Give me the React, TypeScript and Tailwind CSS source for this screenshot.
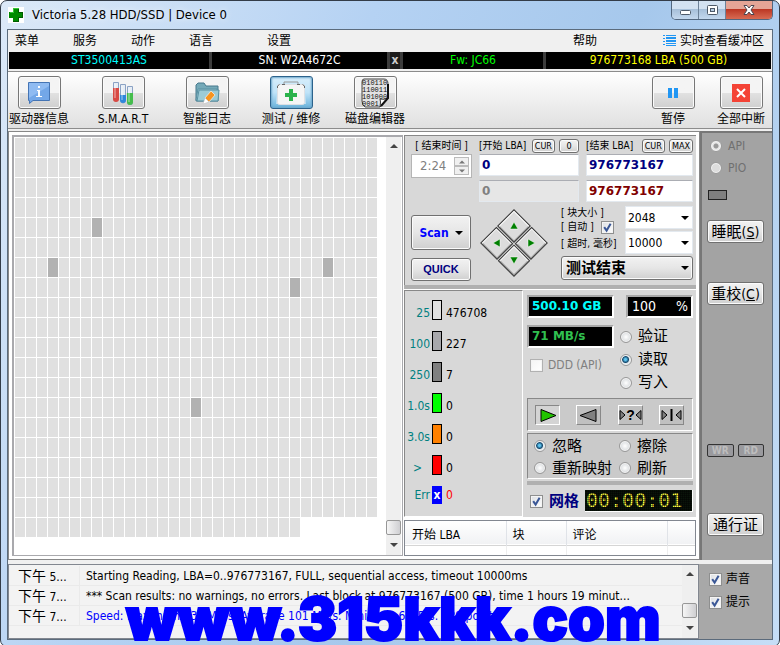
import { ReactNode } from "react";
import clsx from "clsx";

const COLUMNS = 33;
const TOTAL_CELLS = 19 * COLUMNS + 26;
const SLOW_CELLS = [
  4 * COLUMNS + 7,
  6 * COLUMNS + 3,
  6 * COLUMNS + 28,
  7 * COLUMNS + 25,
  13 * COLUMNS + 16,
];

const TIMINGS = [
  { label: "25", value: "476708", color: "bg-[#e0e0e0]" },
  { label: "100", value: "227", color: "bg-[#a8a8ac]" },
  { label: "250", value: "7", color: "bg-[#808080]" },
  { label: "1.0s", value: "0", color: "bg-[#00ff00]" },
  { label: "3.0s", value: "0", color: "bg-[#ff8000]" },
  { label: ">", value: "0", color: "bg-[#ff0000]" },
];

const LOG = [
  {
    time: "下午 5...",
    text: "Starting Reading, LBA=0..976773167, FULL, sequential access, timeout 10000ms",
    blue: false,
  },
  {
    time: "下午 7...",
    text: "*** Scan results: no warnings, no errors. Last block at 976773167 (500 GB), time 1 hours 19 minut...",
    blue: false,
  },
  {
    time: "下午 7...",
    text: "Speed: Maximum 130 MB/s. Average 101 MB/s. Minimum 6 MB/s. 389 points.",
    blue: true,
  },
];

const buttonFace =
  "rounded-[3px] border border-[#707070] bg-linear-to-b from-[#f2f2f2] via-[#e6e6e6] to-[#cfcfcf] shadow-[inset_0_0_0_1px_#fbfbfb]";
const sunken =
  "border border-t-[#888] border-l-[#888] border-r-white border-b-white";

function Check({
  label,
  checked,
  disabled,
  children,
  className,
}: {
  label?: string;
  checked?: boolean;
  disabled?: boolean;
  children?: ReactNode;
  className?: string;
}) {
  return (
    <label className={clsx("flex items-center whitespace-nowrap", className)}>
      <span className="relative size-[13px] shrink-0">
        <input
          type="checkbox"
          defaultChecked={checked}
          disabled={disabled}
          aria-label={label}
          className="peer block size-[13px] appearance-none border border-[#8e8f8f] bg-linear-to-br from-[#dcdfe3] to-white shadow-[inset_0_0_0_1px_#f4f4f4] disabled:border-[#b1b1b1] disabled:from-[#f4f4f4]"
        />
        <svg
          viewBox="0 0 13 13"
          className="pointer-events-none absolute inset-0 hidden peer-checked:block"
        >
          <path
            d="M3.2 6.2 L5.6 9.6 L9.6 2.8"
            fill="none"
            stroke="#3a5796"
            strokeWidth="2"
          />
        </svg>
      </span>
      {children}
    </label>
  );
}

function Radio({
  name,
  checked,
  disabled,
  children,
}: {
  name: string;
  checked?: boolean;
  disabled?: boolean;
  children: ReactNode;
}) {
  return (
    <label className="flex items-center gap-[6px] whitespace-nowrap">
      <input
        type="radio"
        name={name}
        defaultChecked={checked}
        disabled={disabled}
        className={clsx(
          "size-3 shrink-0 appearance-none rounded-full border border-[#999] shadow-[inset_0_0_0_1px_#f4f4f4]",
          disabled
            ? "bg-[#ddd] checked:bg-[radial-gradient(circle,#999_0_2px,#e8e8e8_3px)]"
            : "bg-radial from-white to-[#c8ccd0] checked:bg-[radial-gradient(circle_at_45%_45%,#5fc4ee_0_1px,#14496e_3px,#dfe6ea_4px)]"
        )}
      />
      {children}
    </label>
  );
}

function ToolButton({
  label,
  active,
  children,
}: {
  label: string;
  active?: boolean;
  children: ReactNode;
}) {
  return (
    <button className="flex w-[60px] shrink-0 flex-col items-center gap-px">
      <span
        className={clsx(
          "flex h-[33px] w-[43px] items-center justify-center rounded-[3px] border",
          active
            ? "border-[#2c628b] bg-linear-to-b from-[#d8eefb] via-[#bfe3f8] to-[#68b3db] shadow-[inset_0_0_2px_1px_#6fa8cc]"
            : "border-[#777] bg-linear-to-b from-[#f4f4f4] from-50% via-[#e2e2e2] via-50% to-[#cfcfcf] shadow-[inset_0_0_0_1px_#fbfbfb]"
        )}
      >
        {children}
      </span>
      <span className="text-xs leading-[18px] whitespace-nowrap">{label}</span>
    </button>
  );
}

function ScrollBar({ className }: { className?: string }) {
  return (
    <div
      className={clsx(
        "flex w-[15px] shrink-0 flex-col items-center bg-[#efefef]",
        className
      )}
    >
      <svg viewBox="0 0 8 16" className="h-4 w-2 shrink-0">
        <path d="M0 11 L4 7 L8 11Z" fill="#444" />
      </svg>
      <div className="flex-1" />
      <div className="h-[15px] w-[15px] shrink-0 rounded-[2px] border border-[#979797] bg-linear-to-r from-[#f6f6f6] to-[#cfcfd2]" />
      <svg viewBox="0 0 8 20" className="h-5 w-2 shrink-0">
        <path d="M0 8 L8 8 L4 12Z" fill="#444" />
      </svg>
    </div>
  );
}

function Arrow({ className }: { className?: string }) {
  return (
    <svg viewBox="0 0 8 4" className={clsx("h-1 w-2", className)}>
      <path d="M0 0 L8 0 L4 4Z" fill="#000" />
    </svg>
  );
}

function Dropdown({
  label,
  value,
  className,
}: {
  label: string;
  value: string;
  className: string;
}) {
  return (
    <div className="relative">
      <select
        aria-label={label}
        defaultValue={value}
        className={clsx("block w-full appearance-none", className)}
      >
        <option>{value}</option>
      </select>
      <Arrow className="pointer-events-none absolute top-1/2 right-1 -translate-y-1/2" />
    </div>
  );
}

function TitleBar() {
  return (
    <header className="flex h-[28px] items-start pl-px">
      <svg viewBox="0 0 16 16" className="mt-[6px] size-4 bg-white">
        <path d="M5 1h6v4h4v6h-4v4H5v-4H1V5h4z" fill="#008a00" />
        <path d="M5 1h6v1H6v4H2V5h3z" fill="#35c435" />
        <path d="M11 2v3h4v6h-4v4H5v-1h5v-4h4V6h-4V2z" fill="#005c00" />
      </svg>
      <h1 className="ml-2 flex-1 pt-1 text-[13px] leading-5 [text-shadow:0_0_6px_white]">
        Victoria 5.28 HDD/SSD | Device 0
      </h1>
      <div className="flex h-[19px] overflow-hidden rounded-b-[5px] border border-t-0 border-[#52677f]">
        <button
          aria-label="Minimize"
          className="flex w-[27px] items-center justify-center border-r border-[#6d8299] bg-linear-to-b from-[#d3e2f2] from-45% via-[#a6bfd9] via-45% to-[#c3d8ee]"
        >
          <svg viewBox="0 0 13 12" className="h-3 w-[13px]">
            <rect x="1.5" y="6.5" width="10" height="4" rx="1" fill="#fff" stroke="#4e5a69" />
          </svg>
        </button>
        <button
          aria-label="Maximize"
          className="flex w-[27px] items-center justify-center border-r border-[#6d8299] bg-linear-to-b from-[#d3e2f2] from-45% via-[#a6bfd9] via-45% to-[#c3d8ee]"
        >
          <svg viewBox="0 0 13 12" className="h-3 w-[13px]">
            <rect x="1.5" y="1.5" width="10" height="9" rx="1" fill="#fff" stroke="#4e5a69" />
            <rect x="4.5" y="4.5" width="4" height="3" fill="#b9cde2" stroke="#4e5a69" />
          </svg>
        </button>
        <button
          aria-label="Close"
          className="flex w-[46px] items-center justify-center bg-linear-to-b from-[#e5a596] from-45% via-[#bb3522] via-45% to-[#d86a52]"
        >
          <svg viewBox="0 0 12 12" className="size-3">
            <path d="M1 1.5h3l2 2.5 2-2.5h3L8 6l3 4.5H8L6 8l-2 2.5H1L4 6z" fill="#fff" stroke="#4c4650" />
          </svg>
        </button>
      </div>
    </header>
  );
}

function MenuBar() {
  return (
    <nav className="flex h-[21px] items-center bg-[#f0f0f0] pr-2 pl-[7px] text-xs leading-4">
      <button className="w-[58px] text-left">菜单</button>
      <button className="w-[58px] text-left">服务</button>
      <button className="w-[58px] text-left">动作</button>
      <button className="w-[78px] text-left">语言</button>
      <button className="text-left">设置</button>
      <div className="flex-1" />
      <button className="w-[90px] text-left">帮助</button>
      <button className="flex items-center gap-1 whitespace-nowrap">
        <svg viewBox="0 0 13 13" className="size-[13px]" fill="#2196f3">
          <path d="M0 1h2v1H0zM0 4h2v1H0zM0 7h2v1H0zM0 10h2v1H0zM3 1h10v1H3zM3 3h10v2H3zM3 6h10v2H3zM3 9h10v1H3zM3 11h10v1H3z" />
        </svg>
        实时查看缓冲区
      </button>
    </nav>
  );
}

function DriveBar() {
  return (
    <div className="mx-px mt-px flex h-[17px] bg-black text-center text-xs leading-[17px] text-white">
      <div className="w-[203px] border-r-[3px] border-[#3c3c3c] text-[#00ffff]">
        ST3500413AS
      </div>
      <div className="w-[178px] border-r-[3px] border-[#3c3c3c]">SN: W2A4672C</div>
      <button aria-label="Clear" className="w-[13px] border-r-[3px] border-[#3c3c3c] bg-[#1c1c1c] font-bold leading-[15px] text-[#ccc]">
        x
      </button>
      <div className="w-[143px] border-r-[3px] border-[#3c3c3c] text-[#00ff00]">
        Fw: JC66
      </div>
      <div className="flex-1 text-[#ffff00]">976773168 LBA (500 GB)</div>
    </div>
  );
}

function Toolbar() {
  return (
    <div className="mt-[2px] flex h-[58px] border-y border-[#8c8c8c] bg-linear-to-b from-white to-[#e0e0e0] px-px pt-1">
      <div className="flex gap-6">
        <ToolButton label="驱动器信息">
          <svg viewBox="0 0 22 24" className="h-6 w-[22px]">
            <path d="M0.500 1.500h21v18H5l-3.500 3v-3h-1z" fill="#73a7e8" stroke="#4474b4" />
            <path d="M1 2h20v3L1 17z" fill="#8fbbf2" />
            <path d="M10 5h2v2h-2zM9 9h3v6h2v1H8v-1h2v-5H9z" fill="#fff" />
          </svg>
        </ToolButton>
        <ToolButton label="S.M.A.R.T">
          <svg viewBox="0 0 22 24" className="h-6 w-[22px]">
            <g fill="#e6edf5" stroke="#8ba2c4">
              <path d="M1.500 1.500h5v16a2.500 2.500 0 0 1-5 0z" />
              <path d="M8.500 3.500h5v16a2.500 2.500 0 0 1-5 0z" />
              <path d="M15.500 5.500h5v16a2.500 2.500 0 0 1-5 0z" />
            </g>
            <path d="M1 7h6v11a3 3 0 0 1-6 0z" fill="#d84a44" />
            <path d="M8 14h6v5a3 3 0 0 1-6 0z" fill="#2f87dc" />
            <path d="M15 12h6v9a3 3 0 0 1-6 0z" fill="#45bd4c" />
            <path d="M3 3v14M10 5v14M17 7v14" stroke="#fff" strokeOpacity=".6" />
          </svg>
        </ToolButton>
        <ToolButton label="智能日志">
          <svg viewBox="0 0 26 24" className="h-6 w-[26px]">
            <path d="M2 4l2-2h6l2 3h12v15H2z" fill="#74a9b8" stroke="#47798c" />
            <path d="M4 8h19v11H2z" fill="#b9dbe3" stroke="#5890a2" />
            <path d="M3 20l2-11h20l-1 11z" fill="#9ccbd6" stroke="#5890a2" />
            <path d="M11 17l6-7 4 4-6 7z" fill="#f79420" stroke="#fff" strokeWidth=".6" />
            <path d="M11 17l4 4-6 2z" fill="#fff" stroke="#bbb" strokeWidth=".5" />
          </svg>
        </ToolButton>
        <ToolButton label="测试 / 维修" active>
          <svg viewBox="0 0 32 26" className="h-[26px] w-8">
            <path d="M3 4h26l2 20H1z" fill="#fff" fillOpacity=".5" />
            <path d="M9 4V2h14v2" fill="none" stroke="#999" />
            <rect x="2.500" y="4.500" width="27" height="20" rx="2" fill="#f5f5f5" stroke="#dde0e4" />
            <path d="M2.500 8V6l2-1.500M29.500 8V6l-2-1.500M7 4.500h3M22 4.500h3" fill="none" stroke="#666" />
            <path d="M14 9h4v4h4v4h-4v4h-4v-4h-4v-4h4z" fill="#2bb24c" />
          </svg>
        </ToolButton>
        <ToolButton label="磁盘编辑器">
          <svg viewBox="0 0 28 30" className="h-[30px] w-7">
            <path d="M3 1h20q4 0 4 5v14l-8 9H4q-3-2-3-6V4q0-3 2-3z" fill="#e2e2e2" stroke="#444" />
            <g fontFamily="Liberation Mono, monospace" fontSize="7" fill="#111">
              <text x="1" y="7">010110</text>
              <text x="1" y="14">110011</text>
              <text x="1" y="21">101000</text>
              <text x="1" y="28">0001</text>
            </g>
            <path d="M19 29q1-6 0-8 4 1 8-1z" fill="#fff" stroke="#333" />
            <path d="M27 6v14l-7 8" fill="none" stroke="#111" strokeWidth="2" />
          </svg>
        </ToolButton>
      </div>
      <div className="flex-1" />
      <div className="flex gap-2">
        <ToolButton label="暂停">
          <svg viewBox="0 0 10 10" className="size-[10px]">
            <path d="M0 0h4v10H0zM6 0h4v10H6z" fill="#2196f3" />
          </svg>
        </ToolButton>
        <ToolButton label="全部中断">
          <svg viewBox="0 0 18 18" className="size-[18px]">
            <path d="M0 0h18v18H0z" fill="#f44336" />
            <path d="M5 5l8 8M13 5l-8 8" stroke="#fff" strokeWidth="2" />
          </svg>
        </ToolButton>
      </div>
    </div>
  );
}

function BlockMap() {
  return (
    <div className="flex min-w-0 flex-1 border-t-2 border-r border-b border-l-2 border-[#a9a9ad] bg-white">
      <div className="grid flex-1 auto-rows-[19px] grid-cols-[repeat(33,10px)] content-start gap-px pt-px pl-px">
        {Array.from({ length: TOTAL_CELLS }, (_, i) => (
          <div
            key={i}
            className={SLOW_CELLS.includes(i) ? "bg-[#b2b2b2]" : "bg-[#e0e0e0]"}
          />
        ))}
      </div>
      <ScrollBar className="mr-px" />
    </div>
  );
}

function DirectionPad() {
  const dirs = [
    { name: "Up", d: "M2 9 L6 2 L10 9Z" },
    { name: "Right", d: "M3 2 L10 6 L3 10Z" },
    { name: "Left", d: "M9 2 L2 6 L9 10Z" },
    { name: "Down", d: "M2 3 L6 10 L10 3Z" },
  ];
  return (
    <div className="m-[9px] grid size-12 rotate-45 grid-cols-2 gap-px">
      {dirs.map((dir) => (
        <button
          key={dir.name}
          aria-label={dir.name}
          className="flex items-center justify-center border border-[#333] bg-[#dcdcdc] shadow-[inset_1px_1px_0_white,inset_-1px_-1px_0_#999]"
        >
          <svg viewBox="0 0 12 12" className="size-3 -rotate-45">
            <path d={dir.d} fill="#008000" stroke="#fff" strokeWidth=".5" />
          </svg>
        </button>
      ))}
    </div>
  );
}

function SmallButton({ children }: { children: ReactNode }) {
  return (
    <button className={clsx("h-[14px] min-w-5 px-[2px] text-[9px] leading-3", buttonFace)}>
      {children}
    </button>
  );
}

function LbaInput({
  label,
  value,
  className,
  disabled,
}: {
  label: string;
  value: string;
  className: string;
  disabled?: boolean;
}) {
  return (
    <input
      type="text"
      aria-label={label}
      defaultValue={value}
      disabled={disabled}
      className={clsx(
        "block h-[22px] w-full border border-[#e3e9ef] border-t-[#abadb3] px-[2px] font-['DejaVu_Sans'] text-xs font-bold",
        className
      )}
    />
  );
}

function ScanSettings() {
  return (
    <section className="h-[150px] border-t border-l border-[#888] bg-[#d8d8d8] pr-[3px] pl-[6px]">
      <div className="flex gap-[7px] pt-[2px] text-[10px] leading-4">
        <div className="w-[61px]">
          <div className="text-center whitespace-nowrap">[ 结束时间 ]</div>
          <div className="flex h-6 items-center border border-[#b5b5b5] bg-white pr-[2px]">
            <input
              type="text"
              aria-label="结束时间"
              defaultValue="2:24"
              disabled
              className="w-0 flex-1 pl-2 text-[13px] text-[#808080]"
            />
            <div className="flex w-[15px] flex-col">
              <button aria-label="Increase" disabled className="flex h-[9px] items-center justify-center border border-[#bbb] bg-[#f0f0f0]">
                <Arrow className="w-[6px] rotate-180 opacity-50" />
              </button>
              <button aria-label="Decrease" disabled className="flex h-[9px] items-center justify-center border border-[#bbb] bg-[#f0f0f0]">
                <Arrow className="w-[6px] opacity-50" />
              </button>
            </div>
          </div>
        </div>
        <div className="w-[100px]">
          <div className="flex items-center whitespace-nowrap">
            <span className="flex-1">[开始 LBA]</span>
            <span className="flex gap-1">
              <SmallButton>CUR</SmallButton>
              <SmallButton>0</SmallButton>
            </span>
          </div>
          <LbaInput label="开始 LBA" value="0" className="bg-white text-[#000080]" />
          <div className="h-1" />
          <LbaInput
            label="当前 LBA"
            value="0"
            disabled
            className="bg-[#e6e6e6] text-[#808080]"
          />
        </div>
        <div className="flex-1">
          <div className="flex items-center whitespace-nowrap">
            <span className="flex-1">[结束 LBA]</span>
            <span className="flex gap-1">
              <SmallButton>CUR</SmallButton>
              <SmallButton>MAX</SmallButton>
            </span>
          </div>
          <LbaInput label="结束 LBA" value="976773167" className="bg-white text-[#000080]" />
          <div className="h-1" />
          <LbaInput label="最后 LBA" value="976773167" className="bg-white text-[#800000]" />
        </div>
      </div>
      <div className="mt-1 flex">
        <div className="flex w-[60px] flex-col gap-2 pt-[9px]">
          <button
            className={clsx(
              "flex h-[35px] items-center justify-center gap-[6px] text-xs font-bold text-[#0000ff]",
              buttonFace
            )}
          >
            Scan
            <Arrow />
          </button>
          <button className={clsx("h-[23px] font-['Liberation_Sans'] text-[11px] font-bold text-[#000080]", buttonFace)}>
            QUICK
          </button>
        </div>
        <div className="ml-[10px] pt-1">
          <DirectionPad />
        </div>
        <div className="ml-[14px] flex-1">
          <div className="flex text-[10px]">
            <div className="w-16 leading-[14px] whitespace-nowrap">
              <div>[ 块大小 ]</div>
              <Check checked className="flex-row-reverse justify-end gap-[7px]">
                [ 自动 ]
              </Check>
              <div className="mt-[3px]">[ 超时, 毫秒]</div>
            </div>
            <div className="flex flex-1 flex-col gap-[2px]">
              <Dropdown label="块大小" value="2048" className="h-[23px] border border-[#e3e9ef] bg-white pl-[2px] text-xs" />
              <Dropdown label="超时" value="10000" className="h-[23px] border border-[#e3e9ef] bg-white pl-[2px] text-xs" />
            </div>
          </div>
          <div className="pt-[2px]">
            <Dropdown
              label="测试结束"
              value="测试结束"
              className={clsx("h-6 pl-1 text-[15px] leading-5 font-bold", buttonFace)}
            />
          </div>
        </div>
      </div>
    </section>
  );
}

function Timings() {
  return (
    <section className="w-[119px] border border-t-[#888] border-r-white border-b-white border-l-[#888] pt-[9px] text-xs leading-[14px]">
      {TIMINGS.map((t) => (
        <div key={t.label} className="mb-[11px] flex h-5 items-end gap-[2px]">
          <span className={clsx("w-[25px] text-right whitespace-nowrap text-[#008080]", t.label === ">" && "pr-2")}>
            {t.label}
          </span>
          <span className={clsx("h-5 w-[10px] border border-black", t.color)} />
          <span className="pl-[2px]">{t.value}</span>
        </div>
      ))}
      <div className="flex h-[18px] items-center gap-[2px]">
        <span className="w-[25px] text-right text-[#008080]">Err</span>
        <span className="h-[18px] w-[10px] bg-[#0000ff] text-center font-bold leading-[18px] text-white">
          x
        </span>
        <span className="pl-[2px] text-[#ff0000]">0</span>
      </div>
    </section>
  );
}

const lcd =
  "h-[23px] border-2 border-[#a8a8a8] border-r-white border-b-white bg-black whitespace-nowrap";

function StepButton({
  label,
  active,
  children,
}: {
  label: string;
  active?: boolean;
  children: ReactNode;
}) {
  return (
    <button
      aria-label={label}
      className={clsx(
        "h-5 w-[25px] border",
        active
          ? "border-[#888] border-r-white border-b-white bg-[#d4d4d4]"
          : "border-white border-r-[#888] border-b-[#888] bg-[#c0c0c0]"
      )}
    >
      <svg viewBox="0 0 23 18" className="h-[18px] w-[23px]">
        {children}
      </svg>
    </button>
  );
}

function ScanControls() {
  return (
    <section className="min-w-0 flex-1 pt-[5px] pr-[3px] pl-1">
      <div className="flex justify-between">
        <div className="w-[87px]">
          <div className={clsx("px-[3px] font-['DejaVu_Sans'] text-xs leading-[19px] font-bold text-[#00ffff]", lcd)}>
            500.10 GB
          </div>
          <div className={clsx("mt-[7px] px-[3px] font-['DejaVu_Sans'] text-xs leading-[19px] font-bold text-[#30c050]", lcd)}>
            71 MB/s
          </div>
          <Check disabled className="mt-[9px] ml-[3px] gap-[5px] text-xs leading-4 text-[#808080]">
            DDD (API)
          </Check>
        </div>
        <div className="w-[67px]">
          <div className={clsx("flex justify-between pr-[3px] pl-1 text-sm leading-[19px] text-white", lcd)}>
            <span>100</span>
            <span>%</span>
          </div>
          <div className="-ml-[6px] mt-[7px] text-[15px] leading-[23px]">
            <Radio name="mode">验证</Radio>
            <Radio name="mode" checked>读取</Radio>
            <Radio name="mode">写入</Radio>
          </div>
        </div>
      </div>
      <div className={clsx("mt-1 flex h-[33px] items-center justify-between bg-[#cacaca] pr-2 pl-[7px]", sunken)}>
        <StepButton label="Forward" active>
          <path d="M5 3.500v12L20 9.500z" fill="#22c400" stroke="#000" />
        </StepButton>
        <StepButton label="Backward">
          <path d="M19 3.500v12L3 9.500z" fill="#808080" stroke="#000" />
        </StepButton>
        <StepButton label="Random">
          <path d="M1 4.500v9L6 9z M22 4.500v9L17 9z" fill="#808080" stroke="#000" />
          <text x="11.500" y="14" textAnchor="middle" fontFamily="Liberation Sans, sans-serif" fontWeight="bold" fontSize="14">
            ?
          </text>
        </StepButton>
        <StepButton label="Butterfly">
          <path d="M2 4.500v9L7 9z M21 4.500v9L16 9z" fill="#808080" stroke="#000" />
          <path d="M11.500 3v12" stroke="#000" strokeWidth="2" />
        </StepButton>
      </div>
      <div className={clsx("mt-[2px] grid h-[46px] grid-cols-[85px_1fr] pt-px pl-[6px] text-[15px] leading-[22px]", sunken, "bg-[#cacaca]")}>
        <Radio name="action" checked>忽略</Radio>
        <Radio name="action">擦除</Radio>
        <Radio name="action">重新映射</Radio>
        <Radio name="action">刷新</Radio>
      </div>
      <div className="mt-[2px] h-1 bg-[#b0b0b0]" />
      <div className="mt-[5px] flex items-center justify-between pl-[3px]">
        <Check checked className="gap-[6px] text-[15px] leading-5 font-bold text-[#000080]">
          网格
        </Check>
        <div className="relative h-[22px] w-[108px] border-r border-b border-white bg-[#0a140a]">
          <div className="pl-px font-['DejaVu_Sans_Mono'] text-xl leading-[21px] text-[#ffff40]">
            00:00:01
          </div>
          <div className="absolute inset-0 bg-[repeating-linear-gradient(to_right,transparent_0_1px,#00000066_1px_2px),repeating-linear-gradient(to_bottom,transparent_0_1px,#00000066_1px_2px)]" />
        </div>
      </div>
    </section>
  );
}

function DefectTable() {
  return (
    <div className="mt-[3px] flex-1 border border-[#828790] bg-white">
      <table className="w-full table-fixed text-left text-xs">
        <thead className="h-6 border-b border-[#d5d5d5] bg-linear-to-b from-white to-[#f1f2f4]">
          <tr>
            <th className="w-[101px] border-r border-[#e0e3e8] pt-1 pl-[7px] font-normal">开始 LBA</th>
            <th className="w-[60px] border-r border-[#e0e3e8] pt-1 pl-[6px] font-normal">块</th>
            <th className="border-r border-[#e0e3e8] pt-1 pl-[6px] font-normal">评论</th>
            <th className="w-7" aria-label="Extra" />
          </tr>
        </thead>
        <tbody className="h-[10px]">
          <tr>
            <td className="border-r border-[#eee]" />
            <td className="border-r border-[#eee]" />
            <td className="border-r border-[#eee]" />
            <td />
          </tr>
        </tbody>
      </table>
    </div>
  );
}

function Sidebar() {
  return (
    <aside className="flex w-[72px] shrink-0 flex-col border-t-2 border-l-2 border-[#777] bg-[#a3a3a3] pr-2 pl-[5px]">
      <div className="pt-[2px] pl-[3px] text-xs leading-[22px] text-[#707070]">
        <Radio name="bus" checked disabled>API</Radio>
        <Radio name="bus" disabled>PIO</Radio>
      </div>
      <div className="mt-[11px] ml-px h-[10px] w-[19px] border border-[#222] bg-[#808080]" />
      <button className={clsx("mt-5 h-[23px] text-[15px] leading-5 whitespace-nowrap", buttonFace)}>
        睡眠<span className="text-sm">(<u>S</u>)</span>
      </button>
      <button className={clsx("mt-[39px] h-[23px] text-[15px] leading-5 whitespace-nowrap", buttonFace)}>
        重校<span className="text-sm">(<u>C</u>)</span>
      </button>
      <div className="flex-1" />
      <div className="flex gap-1 text-center text-[10px] leading-[11px] font-bold text-[#bdbdbd]">
        <span className="h-[13px] w-7 rounded-[2px] border border-[#333] bg-[#9a9a9e]">WR</span>
        <span className="h-[13px] w-7 rounded-[2px] border border-[#333] bg-[#9a9a9e]">RD</span>
      </div>
      <button className={clsx("mt-14 mb-6 h-[23px] text-[15px] leading-5", buttonFace)}>
        通行证
      </button>
    </aside>
  );
}

function LogPanel() {
  return (
    <div className="mt-1 flex h-[75px]">
      <div className="flex min-w-0 flex-1 border border-[#828790] bg-[#f3f3f3]">
        <table className="flex-1 table-fixed text-left text-xs">
          <tbody className="block pt-px">
            {LOG.map((row) => (
              <tr key={row.text} className="flex h-5 leading-[21px]">
                <td className="w-[71px] shrink-0 border-r border-b border-[#eaeaea] pl-[9px] whitespace-nowrap">
                  <span className="text-sm leading-5">{row.time.slice(0, 2)}</span>
                  {row.time.slice(2)}
                </td>
                <td
                  className={clsx(
                    "flex-1 border-b border-[#eaeaea] pl-[6px] whitespace-nowrap",
                    row.blue && "text-[#0000ff]"
                  )}
                >
                  {row.text}
                </td>
              </tr>
            ))}
          </tbody>
        </table>
        <ScrollBar className="mr-px" />
      </div>
      <div className="flex w-[73px] flex-col gap-1 bg-[#a8a8a8] pt-[6px] pl-[10px] text-xs leading-[19px]">
        <Check checked className="gap-1">声音</Check>
        <Check checked className="gap-1">提示</Check>
      </div>
    </div>
  );
}

export default function App() {
  return (
    <div className="relative min-h-screen overflow-hidden rounded-[7px] border border-[#333c48] bg-[linear-gradient(115deg,#dce9f8_0%,#b5d2f3_35%,#a6c8ec_60%,#c6def7_100%)] px-[6px] pb-[6px] font-['DejaVu_Sans_Condensed','Noto_Sans_CJK_SC',sans-serif] text-black">
      <TitleBar />
      <main className="border border-[#5b6b7c] bg-[#f0f0f0]">
        <MenuBar />
        <DriveBar />
        <Toolbar />
        <div className="mt-[2px] flex h-[429px]">
          <div className="flex min-w-0 flex-1 gap-px border border-[#888] bg-white p-[3px]">
            <BlockMap />
            <div className="flex w-[292px] shrink-0 flex-col">
              <ScanSettings />
              <div className="h-1 bg-[#b0b0b0]" />
              <div className="mt-px flex h-[227px] bg-[#d8d8d8]">
                <Timings />
                <ScanControls />
              </div>
              <DefectTable />
            </div>
          </div>
          <Sidebar />
        </div>
        <LogPanel />
      </main>
      <div className="pointer-events-none absolute bottom-0 left-[125px] font-['Inter'] text-[59px] leading-[54px] font-black whitespace-nowrap text-[#0000ff] [-webkit-text-stroke:2px_#0000ff]">
        www.315kkk.com
      </div>
    </div>
  );
}
